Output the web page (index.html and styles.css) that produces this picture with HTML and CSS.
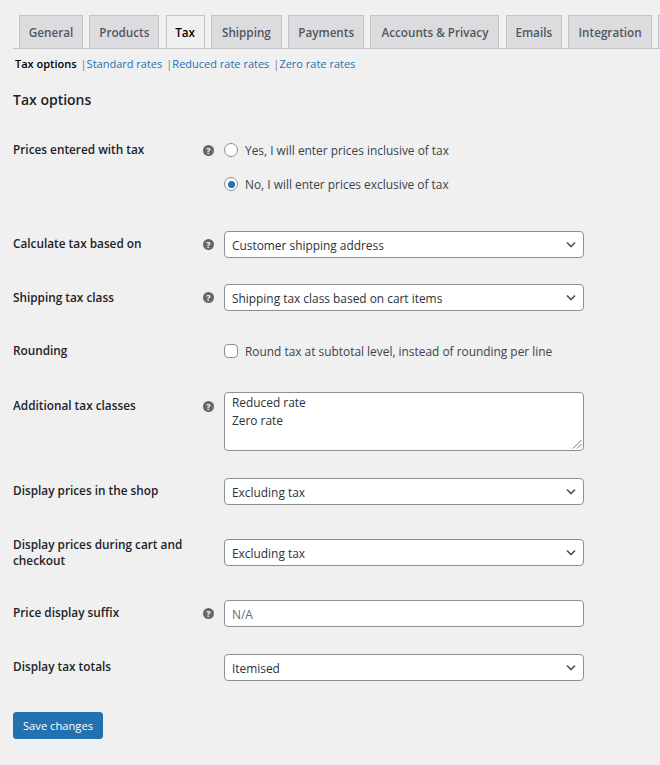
FILE: index.html
```html
<!DOCTYPE html>
<html lang="en">
<head>
    <meta charset="UTF-8">
    <title>Tax options</title>
    <link rel="stylesheet" href="styles.css">
</head>
<body>
<div class="wrap">
    <nav class="tabs">
        <a class="tab" href="#">General</a>
        <a class="tab" href="#">Products</a>
        <a class="tab tabActive" href="#">Tax</a>
        <a class="tab" href="#">Shipping</a>
        <a class="tab" href="#">Payments</a>
        <a class="tab" href="#">Accounts &amp; Privacy</a>
        <a class="tab" href="#">Emails</a>
        <a class="tab" href="#">Integration</a>
        <a class="tab" href="#"></a>
    </nav>

    <ul class="subnav">
        <li class="current">Tax options</li>
        <li><span class="sep">|</span><a href="#">Standard rates</a></li>
        <li><span class="sep">|</span><a href="#">Reduced rate rates</a></li>
        <li><span class="sep">|</span><a href="#">Zero rate rates</a></li>
    </ul>

    <h2>Tax options</h2>

    <form>
        <div class="row rowRadios">
            <div class="label">Prices entered with tax</div>
            <div class="help"><span class="tip">?</span></div>
            <div class="field radios">
                <label class="check"><span class="radio"></span>Yes, I will enter prices inclusive of tax</label>
                <label class="check"><span class="radio radioOn"></span>No, I will enter prices exclusive of tax</label>
            </div>
        </div>
        <div class="row rowTax">
            <div class="label">Calculate tax based on</div>
            <div class="help"><span class="tip">?</span></div>
            <div class="field"><div class="select">Customer shipping address<svg class="chev" viewBox="0 0 12 8"><path d="M2 1.500l4 4 4-4"/></svg></div></div>
        </div>
        <div class="row rowShip">
            <div class="label">Shipping tax class</div>
            <div class="help"><span class="tip">?</span></div>
            <div class="field"><div class="select">Shipping tax class based on cart items<svg class="chev" viewBox="0 0 12 8"><path d="M2 1.500l4 4 4-4"/></svg></div></div>
        </div>
        <div class="row rowRound">
            <div class="label">Rounding</div>
            <div class="help"></div>
            <div class="field"><label class="check"><span class="box"></span>Round tax at subtotal level, instead of rounding per line</label></div>
        </div>
        <div class="row rowClasses">
            <div class="label">Additional tax classes</div>
            <div class="help"><span class="tip">?</span></div>
            <div class="field">
                <div class="textarea">Reduced rate<br>Zero rate
                    <svg class="grip" viewBox="0 0 10 10"><path d="M9.500 1 1 9.500M9.500 5 5 9.500"/></svg>
                </div>
            </div>
        </div>
        <div class="row rowShop">
            <div class="label">Display prices in the shop</div>
            <div class="help"></div>
            <div class="field"><div class="select">Excluding tax<svg class="chev" viewBox="0 0 12 8"><path d="M2 1.500l4 4 4-4"/></svg></div></div>
        </div>
        <div class="row rowCart">
            <div class="label">Display prices during cart and checkout</div>
            <div class="help"></div>
            <div class="field"><div class="select">Excluding tax<svg class="chev" viewBox="0 0 12 8"><path d="M2 1.500l4 4 4-4"/></svg></div></div>
        </div>
        <div class="row rowSuffix">
            <div class="label">Price display suffix</div>
            <div class="help"><span class="tip">?</span></div>
            <div class="field"><div class="select placeholder">N/A</div></div>
        </div>
        <div class="row rowTotals">
            <div class="label">Display tax totals</div>
            <div class="help"></div>
            <div class="field"><div class="select">Itemised<svg class="chev" viewBox="0 0 12 8"><path d="M2 1.500l4 4 4-4"/></svg></div></div>
        </div>
        <button class="save" type="button">Save changes</button>
    </form>
</div>
</body>
</html>
```

FILE: styles.css
```css
html, body {
    margin: 0;
    height: 765px;
    overflow: hidden;
}

body {
    background-color: #f0f0f1;
    color: #3c434a;
    font-family: "Open Sans", "Noto Sans", sans-serif;
    font-size: 12px;
}

.wrap {
    padding: 15px 0 0 13px;
}

.tabs {
    display: grid;
    grid-template-columns: 64px 70px 39px 71px 76px 129px 56px 84px 40px;
    column-gap: 6.300px;
    height: 33px;
    padding-left: 6px;
    border-bottom: 1px solid #c3c4c7;
    overflow: hidden;
}

.tab {
    box-sizing: border-box;
    height: 33px;
    border: 1px solid #c3c4c7;
    border-bottom: 0;
    background-color: #dcdcde;
    color: #50575e;
    font-size: 11.700px;
    font-weight: 600;
    line-height: 33px;
    text-align: center;
    text-decoration: none;
}

.tabActive {
    height: 34px;
    background-color: #f0f0f1;
    color: #000;
}

.subnav {
    display: flex;
    height: 16px;
    margin: 7px 0 0;
    padding: 0 0 0 2px;
    list-style: none;
    font-size: 11px;
    line-height: 16px;
}

.subnav a {
    color: #2271b1;
    text-decoration: none;
}

.current {
    color: #000;
    font-weight: 600;
}

.sep {
    margin-left: 4px;
    color: #787c82;
}

h2 {
    margin: 18px 0 0;
    color: #1d2327;
    font-size: 14px;
    font-weight: 600;
    line-height: 20px;
}

.row {
    display: flex;
    width: 571px;
}

.label {
    flex: none;
    box-sizing: border-box;
    width: 186px;
    padding-top: 4px;
    color: #1d2327;
    font-size: 11.800px;
    font-weight: 600;
    line-height: 16px;
}

.help {
    flex: none;
    width: 25px;
}

.tip {
    display: block;
    width: 11px;
    height: 11px;
    margin: 8px 0 0 4px;
    border-radius: 50%;
    background-color: #666;
    color: #fff;
    font-size: 9px;
    font-weight: 700;
    line-height: 11px;
    text-align: center;
}

.field {
    flex: none;
    width: 360px;
    font-size: 11.900px;
}

.rowRadios { margin-top: 31px; }
.rowTax { margin-top: 39px; }
.rowShip { margin-top: 26px; }
.rowRound { margin-top: 31px; }
.rowClasses { margin-top: 33px; }
.rowShop { margin-top: 27px; }
.rowCart { margin-top: 31px; }
.rowSuffix { margin-top: 32px; }
.rowTotals { margin-top: 27px; }

.rowRadios .label, .rowRound .label, .rowCart .label { padding-top: 0; }
.rowShip .label, .rowClasses .label { padding-top: 5px; }
.rowRadios .tip { margin-top: 4px; }
.rowClasses .tip { margin-top: 9px; }
.rowRadios .field, .rowRound .field { margin-top: 1px; }
.rowCart .field { margin-top: 3px; }

.radios {
    display: flex;
    flex-direction: column;
    gap: 18px;
}

.check {
    display: flex;
    align-items: center;
    height: 16px;
    gap: 7px;
    color: #3c434a;
}

.radio, .box {
    flex: none;
    box-sizing: border-box;
    width: 14px;
    height: 14px;
    border: 1px solid #8c8f94;
    background-color: #fff;
}

.radio {
    position: relative;
    border-radius: 50%;
}

.radioOn::after {
    content: "";
    position: absolute;
    top: 2.500px;
    left: 2.500px;
    width: 7px;
    height: 7px;
    border-radius: 50%;
    background-color: #2271b1;
}

.box {
    border-radius: 4px;
}

.select, .textarea {
    position: relative;
    box-sizing: border-box;
    width: 360px;
    border: 1px solid #8c8f94;
    border-radius: 4px;
    background-color: #fff;
    color: #2c3338;
}

.select {
    height: 27px;
    padding-left: 7px;
    line-height: 26px;
}

.chev {
    position: absolute;
    top: 9px;
    right: 6px;
    width: 12px;
    height: 8px;
}

.chev path {
    fill: none;
    stroke: #50575e;
    stroke-width: 1.700;
}

.textarea {
    height: 59px;
    padding: 0 7px;
    line-height: 18px;
}

.grip {
    position: absolute;
    right: 1px;
    bottom: 1px;
    width: 10px;
    height: 10px;
}

.grip path {
    fill: none;
    stroke: #777;
    stroke-width: 1;
}

.placeholder {
    color: #646970;
}

.save {
    display: block;
    box-sizing: border-box;
    width: 90px;
    height: 27px;
    margin-top: 31px;
    padding: 0;
    border: 1px solid #2271b1;
    border-radius: 3px;
    background-color: #2271b1;
    color: #fff;
    font-family: inherit;
    font-size: 11.200px;
}
```
